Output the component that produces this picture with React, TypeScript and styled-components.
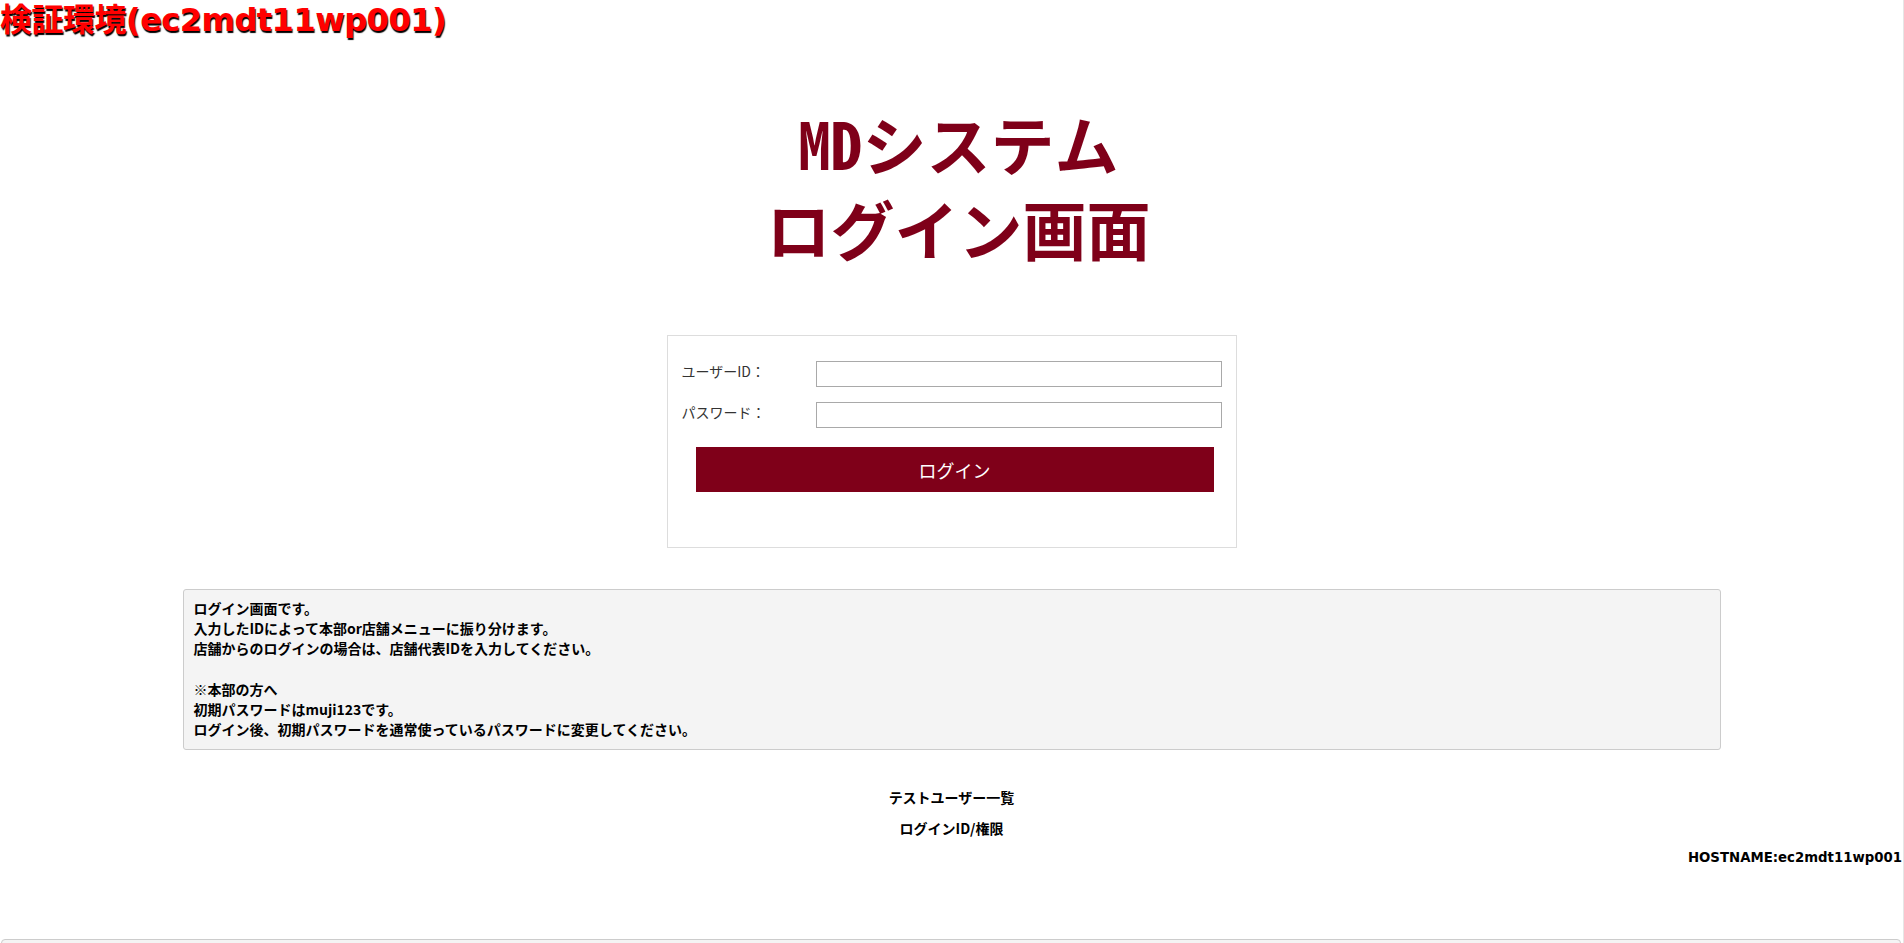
import React from "react";
import styled, { createGlobalStyle } from "styled-components";

const GlobalStyle = createGlobalStyle`
  html, body {
    margin: 0;
    padding: 0;
    background: #ffffff;
    overflow: hidden;
  }
  body {
    font-family: "Noto Sans CJK JP", sans-serif;
    font-size: 14px;
    color: #000;
  }
`;

const Page = styled.div`
  width: 1903px;
  min-height: 943px;
  border-right: 1px solid #e6e6e6;
  display: flex;
  flex-direction: column;
`;

const EnvTitle = styled.div`
  font-family: "DejaVu Sans", "Noto Sans CJK JP", sans-serif;
  font-weight: 700;
  font-size: 32px;
  line-height: 40px;
  height: 40px;
  letter-spacing: -0.5px;
  color: #ff0000;
  text-shadow: 1px 2px 1px #000;
  white-space: nowrap;
`;

const Heading = styled.h1`
  margin: 60px 0 0;
  padding-left: 14px;
  text-align: center;
  font-family: "Noto Sans Mono CJK JP", "Noto Sans CJK JP", monospace;
  font-weight: 700;
  font-size: 64px;
  line-height: 85px;
  color: #7f0019;
`;

const LoginBox = styled.form`
  margin: 65px auto 0;
  width: 568px;
  border: 1px solid #dddddd;
  padding: 25px 0 55px 0;
  display: flex;
  flex-direction: column;
  gap: 15px;
`;

const FieldRow = styled.div`
  display: grid;
  grid-template-columns: 134px 406px;
  padding-left: 14px;
  align-items: start;
`;

const Label = styled.label`
  font-family: "Noto Sans CJK JP", sans-serif;
  font-size: 14px;
  line-height: 20px;
  color: #333;
`;

const TextInput = styled.input`
  box-sizing: border-box;
  width: 406px;
  height: 26px;
  border: 1px solid #a9a9a9;
  padding: 2px 4px;
  font-size: 14px;
  background: #fff;
  outline: none;
`;

const LoginButton = styled.button`
  margin: 4px 0 0 28px;
  width: 518px;
  height: 45px;
  border: none;
  background: #7f0019;
  color: #fff;
  font-family: "Noto Sans CJK JP", sans-serif;
  font-size: 18px;
  cursor: pointer;
`;

const InfoBox = styled.div`
  margin: 41px auto 0;
  width: 1538px;
  background: #f4f4f4;
  border: 1px solid #cccccc;
  border-radius: 3px;
  padding: 8px 10px 10px;
  box-sizing: border-box;
  font-weight: 700;
  font-size: 14px;
  line-height: 20.2px;
`;

const InfoLine = styled.div`
  min-height: 20.2px;
`;

const TestUsers = styled.div`
  margin-top: 37px;
  display: flex;
  flex-direction: column;
  align-items: center;
  gap: 11px;
  font-weight: 700;
  font-size: 14px;
  line-height: 20px;
`;

const HostName = styled.div`
  margin-top: 10px;
  padding-right: 1px;
  text-align: right;
  font-family: "DejaVu Sans", sans-serif;
  font-weight: 700;
  font-size: 13.3px;
  line-height: 20px;
`;

const UserTable = styled.div`
  margin: 71px 2px 0 1px;
  height: 160px;
  background: #f4f4f4;
  border: 1px solid #cccccc;
  border-radius: 4px;
`;

const infoLines = [
  "ログイン画面です。",
  "入力したIDによって本部or店舗メニューに振り分けます。",
  "店舗からのログインの場合は、店舗代表IDを入力してください。",
  "",
  "※本部の方へ",
  "初期パスワードはmuji123です。",
  "ログイン後、初期パスワードを通常使っているパスワードに変更してください。",
];

export default function App() {
  return (
    <>
      <GlobalStyle />
      <Page>
        <EnvTitle>検証環境(ec2mdt11wp001)</EnvTitle>
        <Heading>
          MDシステム
          <br />
          ログイン画面
        </Heading>
        <LoginBox onSubmit={(e) => e.preventDefault()}>
          <FieldRow>
            <Label htmlFor="uid">ユーザーID：</Label>
            <TextInput id="uid" type="text" />
          </FieldRow>
          <FieldRow>
            <Label htmlFor="pwd">パスワード：</Label>
            <TextInput id="pwd" type="password" />
          </FieldRow>
          <LoginButton type="submit">ログイン</LoginButton>
        </LoginBox>
        <InfoBox>
          {infoLines.map((l, i) => (
            <InfoLine key={i}>{l}</InfoLine>
          ))}
        </InfoBox>
        <TestUsers>
          <div>テストユーザー一覧</div>
          <div>ログインID/権限</div>
        </TestUsers>
        <HostName>HOSTNAME:ec2mdt11wp001</HostName>
        <UserTable />
      </Page>
    </>
  );
}
